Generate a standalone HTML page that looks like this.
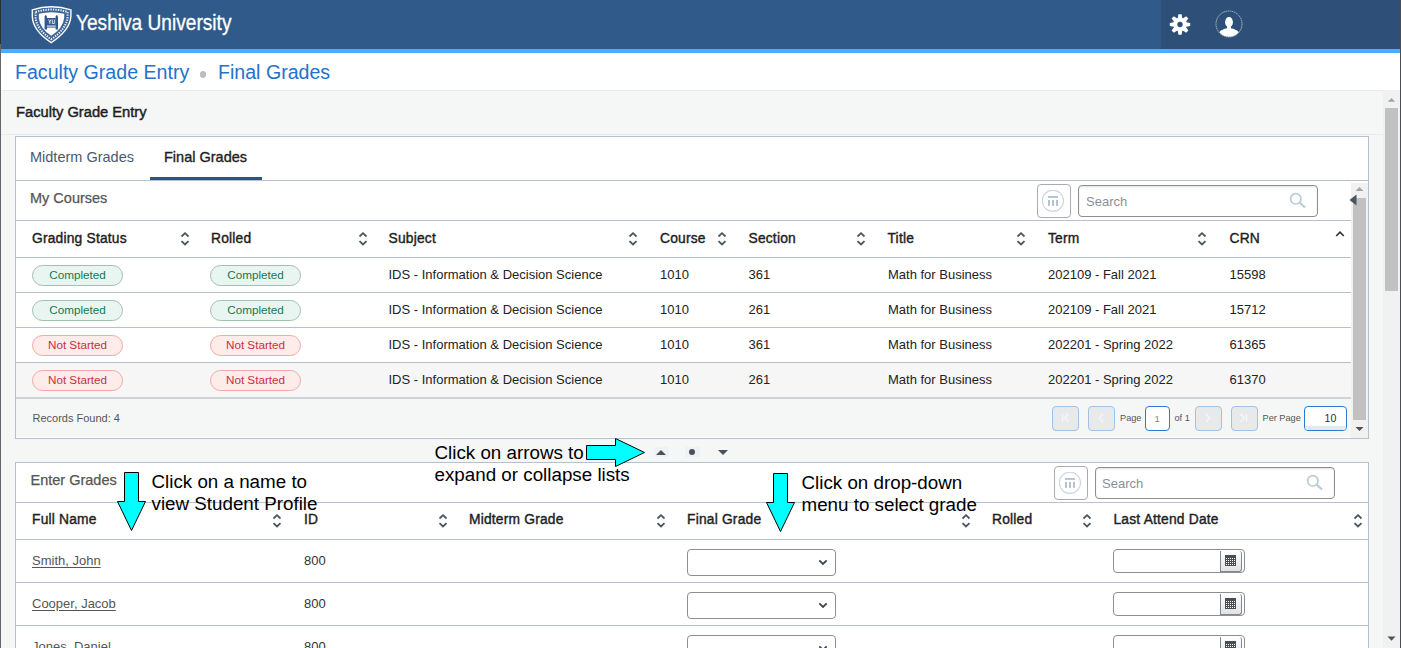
<!DOCTYPE html>
<html><head><meta charset="utf-8">
<style>
*{box-sizing:border-box;margin:0;padding:0}
html,body{width:1401px;height:648px;overflow:hidden;background:#f5f6f6;font-family:"Liberation Sans",sans-serif;color:#222}
.a{position:absolute}
.t{position:absolute;white-space:nowrap;line-height:1}
#hdr{left:0;top:0;width:1401px;height:49px;background:#305a8a}
#hdr2{left:1161px;top:0;width:240px;height:49px;background:#2e5078}
#hbar{left:0;top:49px;width:1401px;height:4px;background:#50abfd}
#crumb{left:0;top:53px;width:1401px;height:38px;background:#fff;border-bottom:1px solid #e8ecef}
.card{position:absolute;background:#fff;border:1px solid #b4c2cf}
.hline{position:absolute;height:1px;background:#b4c2cf}
.th{position:absolute;font-size:13.8px;color:#1e1e1e;-webkit-text-stroke:0.4px #1e1e1e;letter-spacing:0.2px;white-space:nowrap;line-height:1}
.td{position:absolute;font-size:13px;color:#222;white-space:nowrap;line-height:1}
.badge{position:absolute;width:91px;height:21px;border-radius:11px;font-size:11.7px;text-align:center;line-height:17.5px}
.bg{background:#e9f5f1;border:1px solid #a3bfb3;color:#16784c}
.br{background:#fdecea;border:1px solid #f4a9a0;color:#c8303e}
.sort{position:absolute;width:9px;height:14px}
.ann{position:absolute;font-size:18.8px;color:#000;white-space:nowrap;line-height:1}
.colbtn{width:34px;height:34px;border:1.2px solid #aaaab0;border-radius:4px;background:#fff}
.search{height:32px;border:1px solid #8e8e8e;border-radius:4px;background:#fff;box-shadow:inset 0 1px 2px rgba(0,0,0,.12)}
.pbtn{width:27px;height:25px;border:1px solid #9ec3e6;border-radius:4px;background:#e8e9ea}
.pin{height:25px;border:1.5px solid #2d7bd1;border-radius:4px;background:#fff}
.nm{color:#555;text-decoration:underline;text-underline-offset:2px}
.sel{width:149px;height:27px;border:1px solid #8e8e8e;border-radius:4px;background:#fff}
.dt{width:132px;height:24px;border:1px solid #8e8e8e;border-radius:4px;background:#fff}
.cal{width:22px;height:21px;border-left:1px solid #7a8a99;border-right:1px solid #7a8a99;border-bottom:1px solid #7a8a99;border-radius:0 3px 3px 0;background:linear-gradient(#fff,#e2e2e2)}
</style></head><body>
<!-- header -->
<div id="hdr" class="a"></div>
<div id="hdr2" class="a"></div>
<div id="hbar" class="a"></div>


<!-- logo shield -->
<svg class="a" style="left:28px;top:3px" width="48" height="43" viewBox="0 0 48 43">
  <path d="M4.3 6.8 Q23.2 0.8 42.9 6.8 L42.9 13.5 Q41.8 27.5 23.2 39.6 Q4.8 27.5 4.3 13.5 Z" fill="#3d6494" stroke="#fff" stroke-width="1.4"/>
  <path d="M7.6 8.9 Q23.2 4.2 39.6 8.9 L39.6 14 Q38.5 26 23.2 36.2 Q8.2 26 7.6 14 Z" fill="none" stroke="#e8eef5" stroke-width="2" stroke-dasharray="1.4 1.1"/>
  <path d="M10.8 10.8 Q23.2 7.6 36.3 10.8 L36.1 15.5 Q34.8 25.5 23.2 32.8 Q12 25.5 10.9 15.5 Z" fill="#fff"/>
  <g fill="#33598a">
    <path d="M16.6 13.5 L17.8 11.8 L19 13.5 V26.5 H16.6Z"/>
    <path d="M27.6 13.5 L28.8 11.8 L30 13.5 V26.5 H27.6Z"/>
    <rect x="18.8" y="15" width="9" height="7.6"/>
    <rect x="18.8" y="23.6" width="9" height="1"/>
  </g>
  <path d="M20.5 16.5 L21.8 19 L23 16.5 M21.8 19 V21 M24.3 16.5 V20.5 H26.3 V16.5" fill="none" stroke="#fff" stroke-width="0.8"/>
</svg>
<div class="t" style="left:76px;top:12px;font-size:21.6px;color:#fff;-webkit-text-stroke:0.3px #fff;transform:scaleX(0.885);transform-origin:0 0">Yeshiva University</div>

<!-- gear -->
<svg class="a" style="left:1168.8px;top:13px" width="22" height="23" viewBox="-11 -11.5 22 23">
  <g fill="#fff"><circle r="6.8"/><path d="M-1.6 -10.2 L1.6 -10.2 L2.5 -5 L-2.5 -5 Z" transform="rotate(0)"/><path d="M-1.6 -10.2 L1.6 -10.2 L2.5 -5 L-2.5 -5 Z" transform="rotate(45)"/><path d="M-1.6 -10.2 L1.6 -10.2 L2.5 -5 L-2.5 -5 Z" transform="rotate(90)"/><path d="M-1.6 -10.2 L1.6 -10.2 L2.5 -5 L-2.5 -5 Z" transform="rotate(135)"/><path d="M-1.6 -10.2 L1.6 -10.2 L2.5 -5 L-2.5 -5 Z" transform="rotate(180)"/><path d="M-1.6 -10.2 L1.6 -10.2 L2.5 -5 L-2.5 -5 Z" transform="rotate(225)"/><path d="M-1.6 -10.2 L1.6 -10.2 L2.5 -5 L-2.5 -5 Z" transform="rotate(270)"/><path d="M-1.6 -10.2 L1.6 -10.2 L2.5 -5 L-2.5 -5 Z" transform="rotate(315)"/></g>
  <circle r="2.7" fill="#2e5078"/>
</svg>
<!-- user -->
<svg class="a" style="left:1215px;top:10px" width="28" height="28" viewBox="0 0 28 28">
  <defs><clipPath id="uc"><circle cx="14" cy="14" r="12.7"/></clipPath></defs>
  <circle cx="14" cy="14" r="13" fill="none" stroke="#b3c1d1" stroke-width="0.9" stroke-dasharray="1.6 0.6"/>
  <ellipse cx="14" cy="12.2" rx="3.9" ry="5.1" fill="#fff"/>
  <ellipse cx="14" cy="26.6" rx="11.2" ry="8.7" fill="#fff" clip-path="url(#uc)"/><rect x="12" y="15" width="4" height="4" fill="#fff"/>
</svg>

<!-- breadcrumb -->
<div id="crumb" class="a"></div>
<div class="t" style="left:15px;top:63px;font-size:19.6px;color:#2272cc">Faculty Grade Entry</div>
<div class="a" style="left:199.9px;top:71.4px;width:6.6px;height:6.6px;border-radius:50%;background:#bdbdbd"></div>
<div class="t" style="left:218px;top:63px;font-size:19.6px;color:#2272cc">Final Grades</div>

<!-- section title -->
<div class="a" style="left:1px;top:134px;width:1382px;height:1px;background:#e9ecee"></div>
<div class="t" style="left:16px;top:105px;font-size:14.7px;color:#1e1e1e;-webkit-text-stroke:0.45px #1e1e1e">Faculty Grade Entry</div>

<!-- outer scrollbar -->
<div class="a" style="left:1383px;top:90px;width:17px;height:558px;background:#f1f1f1"></div>
<div class="a" style="left:1385px;top:108px;width:13px;height:183px;background:#c1c1c1"></div>
<svg class="a" style="left:1387px;top:97px" width="9" height="6"><path d="M0.8 4.8 L4.5 1 L8.2 4.8Z" fill="#a3a3a3"/></svg>
<svg class="a" style="left:1387px;top:636px" width="10" height="6"><path d="M0.5 0.5 L4.5 4.8 L8.5 0.5Z" fill="#505050"/></svg>

<!-- card 1 -->
<div class="card" style="left:15px;top:136px;width:1354px;height:303px"></div>
<div class="t" style="left:30px;top:150px;font-size:14.5px;color:#4a5a6e">Midterm Grades</div>
<div class="t" style="left:164px;top:150px;font-size:14.5px;color:#1e1e1e;-webkit-text-stroke:0.35px #1e1e1e">Final Grades</div>
<div class="a" style="left:150px;top:177px;width:112px;height:3px;background:#2c5584"></div>
<div class="hline" style="left:16px;top:180px;width:1352px"></div>
<div class="t" style="left:30px;top:191px;font-size:14.5px;color:#555;-webkit-text-stroke:0.25px #555">My Courses</div>

<!-- table1 -->
<div class="hline" style="left:16px;top:220px;width:1335px"></div>
<div class="th" style="left:32px;top:232px">Grading Status</div>
<svg class="a" style="left:179.5px;top:230px" width="10" height="16" viewBox="0 0 10 16"><path d="M1.5 6.5 L5 3.2 L8.5 6.5 M1.5 11.1 L5 14.4 L8.5 11.1" fill="none" stroke="#4a5560" stroke-width="1.8"/></svg>
<div class="th" style="left:211px;top:232px">Rolled</div>
<svg class="a" style="left:357.5px;top:230px" width="10" height="16" viewBox="0 0 10 16"><path d="M1.5 6.5 L5 3.2 L8.5 6.5 M1.5 11.1 L5 14.4 L8.5 11.1" fill="none" stroke="#4a5560" stroke-width="1.8"/></svg>
<div class="th" style="left:388.5px;top:232px">Subject</div>
<svg class="a" style="left:628px;top:230px" width="10" height="16" viewBox="0 0 10 16"><path d="M1.5 6.5 L5 3.2 L8.5 6.5 M1.5 11.1 L5 14.4 L8.5 11.1" fill="none" stroke="#4a5560" stroke-width="1.8"/></svg>
<div class="th" style="left:660px;top:232px">Course</div>
<svg class="a" style="left:717px;top:230px" width="10" height="16" viewBox="0 0 10 16"><path d="M1.5 6.5 L5 3.2 L8.5 6.5 M1.5 11.1 L5 14.4 L8.5 11.1" fill="none" stroke="#4a5560" stroke-width="1.8"/></svg>
<div class="th" style="left:748.5px;top:232px">Section</div>
<svg class="a" style="left:855.5px;top:230px" width="10" height="16" viewBox="0 0 10 16"><path d="M1.5 6.5 L5 3.2 L8.5 6.5 M1.5 11.1 L5 14.4 L8.5 11.1" fill="none" stroke="#4a5560" stroke-width="1.8"/></svg>
<div class="th" style="left:887.5px;top:232px">Title</div>
<svg class="a" style="left:1016px;top:230px" width="10" height="16" viewBox="0 0 10 16"><path d="M1.5 6.5 L5 3.2 L8.5 6.5 M1.5 11.1 L5 14.4 L8.5 11.1" fill="none" stroke="#4a5560" stroke-width="1.8"/></svg>
<div class="th" style="left:1048px;top:232px">Term</div>
<svg class="a" style="left:1197px;top:230px" width="10" height="16" viewBox="0 0 10 16"><path d="M1.5 6.5 L5 3.2 L8.5 6.5 M1.5 11.1 L5 14.4 L8.5 11.1" fill="none" stroke="#4a5560" stroke-width="1.8"/></svg>
<div class="th" style="left:1229.5px;top:232px">CRN</div>
<svg class="a" style="left:1335px;top:230px" width="10" height="8" viewBox="0 0 10 8"><path d="M1.2 6 L5 2.2 L8.8 6" fill="none" stroke="#333" stroke-width="1.7"/></svg>
<div class="hline" style="left:16px;top:257px;width:1335px"></div>
<div class="hline" style="left:16px;top:292px;width:1335px"></div>
<div class="badge bg" style="left:32px;top:265px">Completed</div>
<div class="badge bg" style="left:210px;top:265px">Completed</div>
<div class="td" style="left:388.5px;top:268px">IDS - Information &amp; Decision Science</div>
<div class="td" style="left:660px;top:268px">1010</div>
<div class="td" style="left:748.5px;top:268px">361</div>
<div class="td" style="left:888px;top:268px">Math for Business</div>
<div class="td" style="left:1048px;top:268px">202109 - Fall 2021</div>
<div class="td" style="left:1229.5px;top:268px">15598</div>
<div class="hline" style="left:16px;top:327px;width:1335px"></div>
<div class="badge bg" style="left:32px;top:300px">Completed</div>
<div class="badge bg" style="left:210px;top:300px">Completed</div>
<div class="td" style="left:388.5px;top:303px">IDS - Information &amp; Decision Science</div>
<div class="td" style="left:660px;top:303px">1010</div>
<div class="td" style="left:748.5px;top:303px">261</div>
<div class="td" style="left:888px;top:303px">Math for Business</div>
<div class="td" style="left:1048px;top:303px">202109 - Fall 2021</div>
<div class="td" style="left:1229.5px;top:303px">15712</div>
<div class="hline" style="left:16px;top:362px;width:1335px"></div>
<div class="badge br" style="left:32px;top:335px">Not Started</div>
<div class="badge br" style="left:210px;top:335px">Not Started</div>
<div class="td" style="left:388.5px;top:338px">IDS - Information &amp; Decision Science</div>
<div class="td" style="left:660px;top:338px">1010</div>
<div class="td" style="left:748.5px;top:338px">361</div>
<div class="td" style="left:888px;top:338px">Math for Business</div>
<div class="td" style="left:1048px;top:338px">202201 - Spring 2022</div>
<div class="td" style="left:1229.5px;top:338px">61365</div>
<div class="a" style="left:16px;top:363px;width:1335px;height:34px;background:#f6f6f6"></div>
<div class="badge br" style="left:32px;top:370px">Not Started</div>
<div class="badge br" style="left:210px;top:370px">Not Started</div>
<div class="td" style="left:388.5px;top:373px">IDS - Information &amp; Decision Science</div>
<div class="td" style="left:660px;top:373px">1010</div>
<div class="td" style="left:748.5px;top:373px">261</div>
<div class="td" style="left:888px;top:373px">Math for Business</div>
<div class="td" style="left:1048px;top:373px">202201 - Spring 2022</div>
<div class="td" style="left:1229.5px;top:373px">61370</div>

<!-- toolbar 1 -->
<div class="a colbtn" style="left:1037px;top:184px"></div>
<svg class="a" style="left:1042px;top:190px" width="23" height="23" viewBox="0 0 23 23"><circle cx="10.9" cy="10.8" r="10.6" fill="none" stroke="#c9d5de" stroke-width="1.1"/><g fill="#b3c3d0"><rect x="6" y="6" width="10" height="1.9"/><rect x="6" y="9.9" width="2" height="6"/><rect x="10" y="9.9" width="2" height="6"/><rect x="14" y="9.9" width="2" height="6"/></g></svg>
<div class="a search" style="left:1078px;top:185px;width:240px"></div>
<div class="t" style="left:1086px;top:195px;font-size:13px;color:#8a8f94">Search</div>
<svg class="a" style="left:1289px;top:192px" width="18" height="17" viewBox="0 0 18 17"><circle cx="6.8" cy="6.8" r="5.2" fill="none" stroke="#b9cad8" stroke-width="1.7"/><path d="M10.5 10.5 L16 15.5" stroke="#b9cad8" stroke-width="2.2"/></svg>

<!-- inner scrollbar -->
<div class="a" style="left:1351px;top:183px;width:17px;height:255px;background:#f1f1f1"></div>
<div class="a" style="left:1353px;top:198px;width:13px;height:222px;background:#c1c1c1"></div>
<svg class="a" style="left:1355px;top:186px" width="9" height="6"><path d="M0.5 5 L4.5 1 L8.5 5Z" fill="#a3a3a3"/></svg>
<svg class="a" style="left:1355px;top:426px" width="9" height="6"><path d="M0.5 1 L4.5 5 L8.5 1Z" fill="#505050"/></svg>
<svg class="a" style="left:1349px;top:194px" width="8" height="12"><path d="M7.5 0.5 L0.5 6 L7.5 11.5Z" fill="#4a5560"/></svg>

<!-- footer 1 -->
<div class="a" style="left:16px;top:397px;width:1335px;height:2px;background:#cfd4d8"></div>
<div class="a" style="left:16px;top:399px;width:1335px;height:38px;background:#f5f7f7"></div>
<div class="t" style="left:32.5px;top:413px;font-size:11px;color:#555">Records Found: 4</div>
<div class="a pbtn" style="left:1052px;top:406px"></div>
<div class="a pbtn" style="left:1088px;top:406px"></div>
<div class="a pbtn" style="left:1195px;top:406px"></div>
<div class="a pbtn" style="left:1231px;top:406px"></div>
<svg class="a" style="left:1052px;top:406px" width="26" height="24" viewBox="0 0 26 24"><path d="M10.5 8v8M16.5 8l-4 4l4 4" fill="none" stroke="#f6f6f6" stroke-width="1.3"/></svg>
<svg class="a" style="left:1088px;top:406px" width="26" height="24" viewBox="0 0 26 24"><path d="M15 8l-4 4l4 4" fill="none" stroke="#f6f6f6" stroke-width="1.3"/></svg>
<svg class="a" style="left:1195px;top:406px" width="26" height="24" viewBox="0 0 26 24"><path d="M11 8l4 4l-4 4" fill="none" stroke="#f6f6f6" stroke-width="1.3"/></svg>
<svg class="a" style="left:1231px;top:406px" width="26" height="24" viewBox="0 0 26 24"><path d="M9.5 8l4 4l-4 4M15.5 8v8" fill="none" stroke="#f6f6f6" stroke-width="1.3"/></svg>
<div class="t" style="left:1120px;top:414px;font-size:9.2px;color:#555">Page</div>
<div class="a pin" style="left:1145px;top:406px;width:25px"></div>
<div class="t" style="left:1154.5px;top:414px;font-size:9.5px;color:#888">1</div>
<div class="t" style="left:1174.5px;top:414px;font-size:9.2px;color:#555">of 1</div>
<div class="t" style="left:1262.5px;top:414px;font-size:9.2px;color:#555">Per Page</div>
<div class="a pin" style="left:1304px;top:406px;width:43px"><div class="a" style="left:0;bottom:0;width:41px;height:4px;background:#e6e9ec;border-radius:0 0 3px 3px"></div></div>
<div class="t" style="left:1324.5px;top:413px;font-size:10.6px;color:#333">10</div>

<!-- expand bar -->
<div class="a" style="left:16px;top:439px;width:1352px;height:23px;background:#f5f7f7"></div>
<div class="a" style="left:654px;top:447px;width:15px;height:10px;background:#eef2f5"></div>
<div class="a" style="left:685px;top:447px;width:15px;height:10px;background:#eef2f5"></div>
<svg class="a" style="left:655px;top:449px" width="12" height="7"><path d="M1 6 L6 1 L11 6Z" fill="#4a5158"/></svg>
<div class="a" style="left:689px;top:449px;width:6px;height:6px;border-radius:50%;background:#4a5158"></div>
<svg class="a" style="left:717px;top:449px" width="12" height="7"><path d="M1 1 L6 6 L11 1Z" fill="#4a5158"/></svg>

<!-- card 2 -->
<div class="card" style="left:15px;top:462px;width:1354px;height:200px"></div>
<div class="t" style="left:30.5px;top:473px;font-size:14.5px;color:#555;-webkit-text-stroke:0.25px #555">Enter Grades</div>
<div class="a colbtn" style="left:1054px;top:466px"></div>
<svg class="a" style="left:1059px;top:472px" width="23" height="23" viewBox="0 0 23 23"><circle cx="10.9" cy="10.8" r="10.6" fill="none" stroke="#c9d5de" stroke-width="1.1"/><g fill="#b3c3d0"><rect x="6" y="6" width="10" height="1.9"/><rect x="6" y="9.9" width="2" height="6"/><rect x="10" y="9.9" width="2" height="6"/><rect x="14" y="9.9" width="2" height="6"/></g></svg>
<div class="a search" style="left:1095px;top:467px;width:240px"></div>
<div class="t" style="left:1102px;top:477px;font-size:13px;color:#8a8f94">Search</div>
<svg class="a" style="left:1306px;top:474px" width="18" height="17" viewBox="0 0 18 17"><circle cx="6.8" cy="6.8" r="5.2" fill="none" stroke="#b9cad8" stroke-width="1.7"/><path d="M10.5 10.5 L16 15.5" stroke="#b9cad8" stroke-width="2.2"/></svg>

<!-- table2 -->
<div class="hline" style="left:16px;top:502px;width:1352px"></div>
<div class="th" style="left:32px;top:513px">Full Name</div>
<svg class="a" style="left:272px;top:512px" width="10" height="16" viewBox="0 0 10 16"><path d="M1.5 6.5 L5 3.2 L8.5 6.5 M1.5 11.1 L5 14.4 L8.5 11.1" fill="none" stroke="#4a5560" stroke-width="1.8"/></svg>
<div class="th" style="left:304px;top:513px">ID</div>
<svg class="a" style="left:437.5px;top:512px" width="10" height="16" viewBox="0 0 10 16"><path d="M1.5 6.5 L5 3.2 L8.5 6.5 M1.5 11.1 L5 14.4 L8.5 11.1" fill="none" stroke="#4a5560" stroke-width="1.8"/></svg>
<div class="th" style="left:469px;top:513px">Midterm Grade</div>
<svg class="a" style="left:655.5px;top:512px" width="10" height="16" viewBox="0 0 10 16"><path d="M1.5 6.5 L5 3.2 L8.5 6.5 M1.5 11.1 L5 14.4 L8.5 11.1" fill="none" stroke="#4a5560" stroke-width="1.8"/></svg>
<div class="th" style="left:687px;top:513px">Final Grade</div>
<svg class="a" style="left:960.5px;top:512px" width="10" height="16" viewBox="0 0 10 16"><path d="M1.5 6.5 L5 3.2 L8.5 6.5 M1.5 11.1 L5 14.4 L8.5 11.1" fill="none" stroke="#4a5560" stroke-width="1.8"/></svg>
<div class="th" style="left:992px;top:513px">Rolled</div>
<svg class="a" style="left:1081.5px;top:512px" width="10" height="16" viewBox="0 0 10 16"><path d="M1.5 6.5 L5 3.2 L8.5 6.5 M1.5 11.1 L5 14.4 L8.5 11.1" fill="none" stroke="#4a5560" stroke-width="1.8"/></svg>
<div class="th" style="left:1113.5px;top:513px">Last Attend Date</div>
<svg class="a" style="left:1352.5px;top:512px" width="10" height="16" viewBox="0 0 10 16"><path d="M1.5 6.5 L5 3.2 L8.5 6.5 M1.5 11.1 L5 14.4 L8.5 11.1" fill="none" stroke="#4a5560" stroke-width="1.8"/></svg>
<div class="hline" style="left:16px;top:539px;width:1352px"></div>
<div class="hline" style="left:16px;top:582px;width:1352px"></div>
<div class="td nm" style="left:32px;top:554px">Smith, John</div>
<div class="td" style="left:304px;top:554px;color:#333">800</div>
<div class="a sel" style="left:687px;top:549px"></div>
<svg class="a" style="left:818px;top:559px" width="10" height="7" viewBox="0 0 10 7"><path d="M1.3 1.3 L5 5 L8.7 1.3" fill="none" stroke="#3d4650" stroke-width="1.8"/></svg>
<div class="a dt" style="left:1113px;top:549px"></div>
<div class="a cal" style="left:1220px;top:551px"></div>
<svg class="a" style="left:1225px;top:555px" width="11" height="11" viewBox="0 0 11 11"><rect x="0" y="0" width="11" height="11" fill="#4a4e52"/><g fill="#fff"><rect x="1" y="3" width="1" height="1"/><rect x="3" y="3" width="1" height="1"/><rect x="5" y="3" width="1" height="1"/><rect x="7" y="3" width="1" height="1"/><rect x="9" y="3" width="1" height="1"/><rect x="1" y="5" width="1" height="1"/><rect x="3" y="5" width="1" height="1"/><rect x="5" y="5" width="1" height="1"/><rect x="7" y="5" width="1" height="1"/><rect x="9" y="5" width="1" height="1"/><rect x="1" y="7" width="1" height="1"/><rect x="3" y="7" width="1" height="1"/><rect x="5" y="7" width="1" height="1"/><rect x="7" y="7" width="1" height="1"/><rect x="9" y="7" width="1" height="1"/><rect x="1" y="9" width="1" height="1"/><rect x="3" y="9" width="1" height="1"/><rect x="5" y="9" width="1" height="1"/><rect x="7" y="9" width="1" height="1"/><rect x="9" y="9" width="1" height="1"/></g></svg>
<div class="hline" style="left:16px;top:625px;width:1352px"></div>
<div class="td nm" style="left:32px;top:597px">Cooper, Jacob</div>
<div class="td" style="left:304px;top:597px;color:#333">800</div>
<div class="a sel" style="left:687px;top:592px"></div>
<svg class="a" style="left:818px;top:602px" width="10" height="7" viewBox="0 0 10 7"><path d="M1.3 1.3 L5 5 L8.7 1.3" fill="none" stroke="#3d4650" stroke-width="1.8"/></svg>
<div class="a dt" style="left:1113px;top:592px"></div>
<div class="a cal" style="left:1220px;top:594px"></div>
<svg class="a" style="left:1225px;top:598px" width="11" height="11" viewBox="0 0 11 11"><rect x="0" y="0" width="11" height="11" fill="#4a4e52"/><g fill="#fff"><rect x="1" y="3" width="1" height="1"/><rect x="3" y="3" width="1" height="1"/><rect x="5" y="3" width="1" height="1"/><rect x="7" y="3" width="1" height="1"/><rect x="9" y="3" width="1" height="1"/><rect x="1" y="5" width="1" height="1"/><rect x="3" y="5" width="1" height="1"/><rect x="5" y="5" width="1" height="1"/><rect x="7" y="5" width="1" height="1"/><rect x="9" y="5" width="1" height="1"/><rect x="1" y="7" width="1" height="1"/><rect x="3" y="7" width="1" height="1"/><rect x="5" y="7" width="1" height="1"/><rect x="7" y="7" width="1" height="1"/><rect x="9" y="7" width="1" height="1"/><rect x="1" y="9" width="1" height="1"/><rect x="3" y="9" width="1" height="1"/><rect x="5" y="9" width="1" height="1"/><rect x="7" y="9" width="1" height="1"/><rect x="9" y="9" width="1" height="1"/></g></svg>
<div class="hline" style="left:16px;top:668px;width:1352px"></div>
<div class="td nm" style="left:32px;top:640px">Jones, Daniel</div>
<div class="td" style="left:304px;top:640px;color:#333">800</div>
<div class="a sel" style="left:687px;top:635px"></div>
<svg class="a" style="left:818px;top:645px" width="10" height="7" viewBox="0 0 10 7"><path d="M1.3 1.3 L5 5 L8.7 1.3" fill="none" stroke="#3d4650" stroke-width="1.8"/></svg>
<div class="a dt" style="left:1113px;top:635px"></div>
<div class="a cal" style="left:1220px;top:637px"></div>
<svg class="a" style="left:1225px;top:641px" width="11" height="11" viewBox="0 0 11 11"><rect x="0" y="0" width="11" height="11" fill="#4a4e52"/><g fill="#fff"><rect x="1" y="3" width="1" height="1"/><rect x="3" y="3" width="1" height="1"/><rect x="5" y="3" width="1" height="1"/><rect x="7" y="3" width="1" height="1"/><rect x="9" y="3" width="1" height="1"/><rect x="1" y="5" width="1" height="1"/><rect x="3" y="5" width="1" height="1"/><rect x="5" y="5" width="1" height="1"/><rect x="7" y="5" width="1" height="1"/><rect x="9" y="5" width="1" height="1"/><rect x="1" y="7" width="1" height="1"/><rect x="3" y="7" width="1" height="1"/><rect x="5" y="7" width="1" height="1"/><rect x="7" y="7" width="1" height="1"/><rect x="9" y="7" width="1" height="1"/><rect x="1" y="9" width="1" height="1"/><rect x="3" y="9" width="1" height="1"/><rect x="5" y="9" width="1" height="1"/><rect x="7" y="9" width="1" height="1"/><rect x="9" y="9" width="1" height="1"/></g></svg>
<!-- annotations -->
<div class="ann" style="left:434.5px;top:443.8px">Click on arrows to</div>
<div class="ann" style="left:434.5px;top:465.8px">expand or collapse lists</div>
<div class="ann" style="left:151.5px;top:473.4px">Click on a name to</div>
<div class="ann" style="left:151.5px;top:495.4px">view Student Profile</div>
<div class="ann" style="left:801.5px;top:474.4px">Click on drop-down</div>
<div class="ann" style="left:801.5px;top:496.4px">menu to select grade</div>
<svg class="a" style="left:0;top:0" width="1401" height="648">
<g fill="#00ffff" stroke="#000" stroke-width="1">
<path d="M586.5 445.5 H615.5 V438.5 L644.5 452.5 L615.5 466.5 V459.5 H586.5 Z"/>
<path d="M124.5 472.5 H138.5 V501.5 H145.5 L131.5 530.5 L117.5 501.5 H124.5 Z"/>
<path d="M773.5 473.5 H787.5 V502.5 H794.5 L780.5 531.5 L766.5 502.5 H773.5 Z"/>
</g></svg>

<div class="a" style="left:0;top:0;width:1px;height:44px;background:#2a2f36"></div>
<div class="a" style="left:0;top:44px;width:1px;height:604px;background:#62666a"></div>
<div class="a" style="left:1400px;top:0;width:1px;height:648px;background:#4a4e52"></div>
</body></html>
